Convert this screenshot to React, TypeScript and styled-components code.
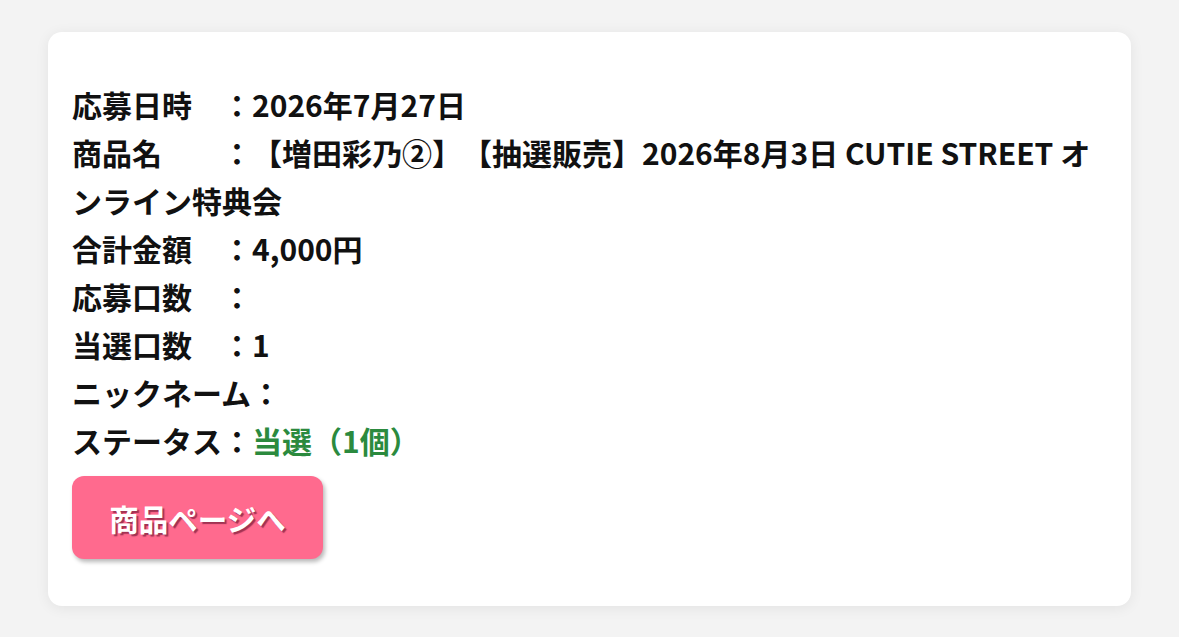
import React from "react";
import styled, { createGlobalStyle } from "styled-components";

const GlobalStyle = createGlobalStyle`
  html, body {
    margin: 0;
    padding: 0;
    background: #f3f3f3;
  }
  body {
    font-family: "Noto Sans CJK JP", "Noto Sans", sans-serif;
  }
`;

const Page = styled.div`
  padding: 32px 48px 30px;
`;

const Card = styled.section`
  background: #ffffff;
  border-radius: 14px;
  box-shadow: 0 2px 14px rgba(0, 0, 0, 0.07);
  padding: 48px 24px 47px 24px;
`;

const Row = styled.p`
  margin: 0;
  font-size: 30px;
  font-weight: 700;
  line-height: 48px;
  color: #111111;
  text-spacing-trim: space-all;
`;

const Value = styled.span<{ $tone?: "normal" | "success" }>`
  color: ${(p) => (p.$tone === "success" ? "#2b8a3e" : "#111111")};
`;

const Button = styled.a`
  display: inline-flex;
  align-items: center;
  justify-content: center;
  margin-top: 12px;
  width: 251px;
  height: 83px;
  border-radius: 12px;
  background: #ff6a8e;
  color: #ffffff;
  font-size: 29.5px;
  font-weight: 700;
  text-decoration: none;
  text-shadow: 2px 2px 1px rgba(110, 20, 50, 0.65);
  box-shadow: 2px 3px 4px rgba(0, 0, 0, 0.28);
  cursor: pointer;
`;

type Item = { label: string; value: string; tone?: "normal" | "success" };

const items: Item[] = [
  { label: "応募日時　", value: "2026年7月27日" },
  {
    label: "商品名　　",
    value: "【増田彩乃②】【抽選販売】2026年8月3日 CUTIE STREET オンライン特典会",
  },
  { label: "合計金額　", value: "4,000円" },
  { label: "応募口数　", value: "" },
  { label: "当選口数　", value: "1" },
  { label: "ニックネーム", value: "" },
  { label: "ステータス", value: "当選（1個）", tone: "success" },
];

export default function App() {
  return (
    <>
      <GlobalStyle />
      <Page>
        <Card>
          {items.map((it) => (
            <Row key={it.label}>
              {it.label}：<Value $tone={it.tone}>{it.value}</Value>
            </Row>
          ))}
          <Button>商品ページへ</Button>
        </Card>
      </Page>
    </>
  );
}
